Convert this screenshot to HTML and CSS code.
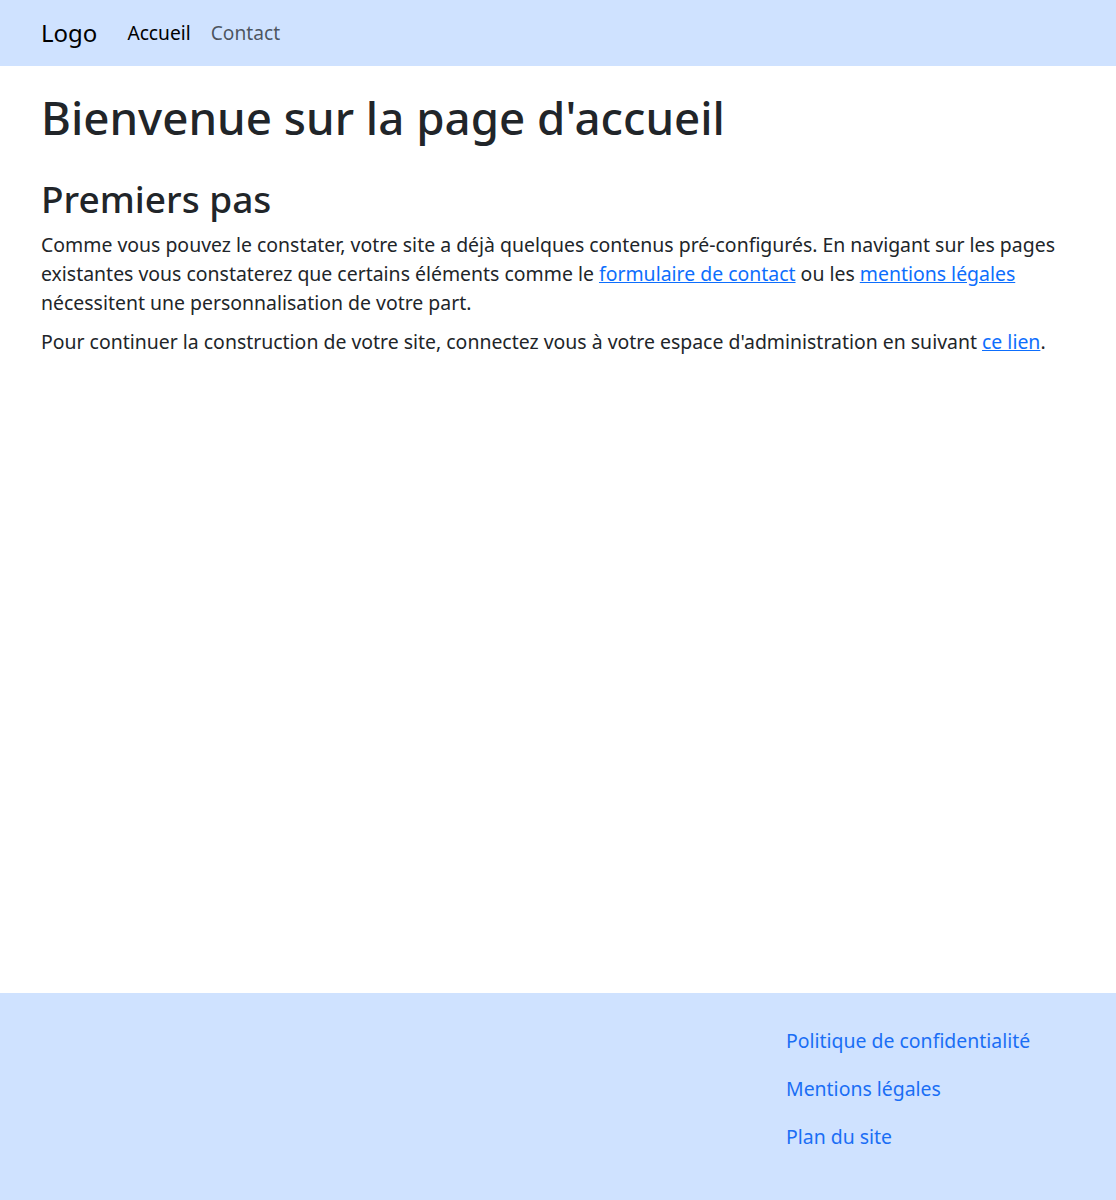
FILE: index.html
```html
<!DOCTYPE html>
<html lang="fr">
<head>
<meta charset="utf-8">
<title>Accueil</title>
<link rel="stylesheet" href="styles.css">
</head>
<body>
<header class="navbar">
  <div class="container nav-inner">
    <a class="brand" href="#">Logo</a>
    <nav class="nav-links">
      <a class="nav-link active" href="#">Accueil</a>
      <a class="nav-link" href="#">Contact</a>
    </nav>
  </div>
</header>
<main class="container main">
  <h1>Bienvenue sur la page d'accueil</h1>
  <h2>Premiers pas</h2>
  <p>Comme vous pouvez le constater, votre site a déjà quelques contenus pré-configurés. En navigant sur les pages existantes vous constaterez que certains éléments comme le <a href="#">formulaire de contact</a> ou les <a href="#">mentions légales</a> nécessitent une personnalisation de votre part.</p>
  <p>Pour continuer la construction de votre site, connectez vous à votre espace d'administration en suivant <a href="#">ce lien</a>.</p>
</main>
<footer class="footer">
  <div class="container footer-inner">
    <ul class="footer-links">
      <li><a href="#">Politique de confidentialité</a></li>
      <li><a href="#">Mentions légales</a></li>
      <li><a href="#">Plan du site</a></li>
    </ul>
  </div>
</footer>
</body>
</html>
```

FILE: styles.css
```css
* { box-sizing: border-box; }
html, body { margin: 0; padding: 0; }
body {
  font-family: "Noto Sans", "Open Sans", sans-serif;
  font-size: 19.45px;
  line-height: 1.5;
  color: #212529;
  background: #fff;
  min-height: 100vh;
  display: flex;
  flex-direction: column;
}
.container {
  padding: 0 41px;
  width: 100%;
}
.navbar {
  background: #cfe2ff;
  height: 66px;
  display: flex;
  align-items: center;
}
.nav-inner {
  display: flex;
  align-items: center;
}
.brand {
  font-size: 24px;
  color: #000;
  text-decoration: none;
  margin-right: 30px;
}
.nav-links {
  display: flex;
  gap: 20px;
}
.nav-link {
  color: rgba(33, 37, 41, 0.75);
  text-decoration: none;
  font-size: 19.2px;
}
.nav-link.active { color: #000; }
.main {
  flex: 1;
  padding-top: 24px;
}
h1 {
  font-size: 45.7px;
  font-weight: 500;
  line-height: 1.2;
  margin: 0 0 32px;
}
h2 {
  font-size: 37px;
  font-weight: 500;
  line-height: 1.2;
  margin: 0 0 9px;
}
p {
  margin: 0 0 10px;
  line-height: 29px;
}
a { color: #0d6efd; }
.footer {
  background: #cfe2ff;
  height: 207px;
}
.footer-inner {
  display: flex;
  justify-content: flex-end;
  padding-top: 24px;
}
.footer-links {
  list-style: none;
  margin: 0;
  padding: 0;
  width: 289px;
}
.footer-links li { line-height: 48px; height: 48px; }
.footer-links a {
  text-decoration: none;
  color: #1a6ef5;
}
```
